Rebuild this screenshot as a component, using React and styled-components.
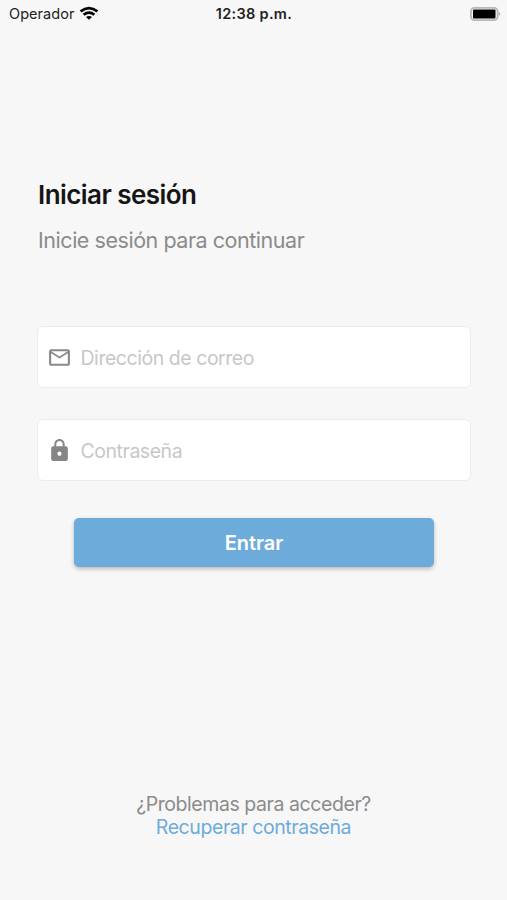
import React from 'react';
import styled, { createGlobalStyle } from 'styled-components';

const Global = createGlobalStyle`
  * { box-sizing: border-box; }
  body { margin: 0; background: #f7f7f7; font-family: Inter, sans-serif; }
`;
const Screen = styled.main`
  width: 507px; height: 900px; background: #f7f7f7;
  display: flex; flex-direction: column; overflow: hidden;
`;
const StatusBar = styled.header`
  height: 27px; padding: 0 6px 0 9px;
  display: grid; grid-template-columns: 1fr auto 1fr; align-items: center;
  font-size: 14.5px; color: #222;
`;
const Carrier = styled.div`
  display: flex; align-items: center; gap: 4px; letter-spacing: 0.06px;
`;
const Clock = styled.time`
  margin-right: 2px; font-weight: 600; font-size: 14.5px; letter-spacing: 0.3px;
`;
const Battery = styled.svg`justify-self: end;`;
const Heading = styled.div`padding: 151px 38px 0;`;
const Title = styled.h1`
  margin: 0; font-size: 26px; line-height: 34px; font-weight: 600;
  letter-spacing: -0.55px; color: #151515;
`;
const Subtitle = styled.p`
  margin: 13px 0 0; font-size: 21.5px; line-height: 30px; letter-spacing: -0.46px; color: #8b8b8b;
`;
const Form = styled.form`
  margin: 71px 36px 0 37px; display: flex; flex-direction: column;
`;
const Field = styled.label`
  height: 62px; margin-bottom: 31px; padding-left: 9px;
  display: flex; align-items: center; gap: 8px;
  background: #fff; border: 1px solid #ececec; border-radius: 6px;
`;
const Input = styled.input`
  flex: 1; min-width: 0; padding: 2px 0 0; border: 0; outline: 0; background: transparent;
  font: 400 19.5px Inter, sans-serif; letter-spacing: -0.46px; text-indent: 0.5px;
  &::placeholder { color: #c7c7c7; opacity: 1; }
`;
const Submit = styled.button`
  height: 49px; margin: 6px 37px 0; border: 0; border-radius: 5px;
  background: #6dabdb; color: #fff; font: 600 20px Inter, sans-serif;
  box-shadow: 0 2px 4px rgba(0,0,0,.25);
`;
const Help = styled.footer`
  margin-top: 226px; text-align: center; font-size: 19.5px; line-height: 23px;
  letter-spacing: -0.43px; color: #8b8b8b;
`;
const Recover = styled.a`display: block; color: #6dabdb;`;

export default function App() {
  return (
    <Screen>
      <Global />
      <StatusBar>
        <Carrier>
          <span>Operador</span>
          <svg width="20" height="15" viewBox="0 0 20 15" fill="none" stroke="#050505" strokeWidth="2.7">
            <path d="M1.6 5.4Q10-1.1 18.4 5.4M4.6 8.8Q10 4.5 15.4 8.8" />
            <path d="M7 11Q10 8.8 13 11L10 13.8Z" fill="#050505" stroke="none" />
          </svg>
        </Carrier>
        <Clock>12:38 p.m.</Clock>
        <Battery width="31" height="14" viewBox="0 0 31 14">
          <rect x=".9" y=".9" width="26.7" height="12.2" rx="3.5" fill="none" stroke="#b8b8b8" strokeWidth="1.8" />
          <rect x="3" y="2.5" width="22.5" height="9" rx="1" fill="#000" />
          <path d="M28.8 4.8Q31.7 7 28.8 9.2Z" fill="#aaa" />
        </Battery>
      </StatusBar>
      <Heading>
        <Title>Iniciar sesión</Title>
        <Subtitle>Inicie sesión para continuar</Subtitle>
      </Heading>
      <Form>
        <Field>
          <svg width="25" height="25" viewBox="0 0 24 24" fill="#888"><path d="M22 6c0-1.1-.9-2-2-2H4c-1.1 0-2 .9-2 2v12c0 1.1.9 2 2 2h16c1.1 0 2-.9 2-2V6zm-2 0-8 5-8-5h16zm0 12H4V8l8 5 8-5v10z" /></svg>
          <Input type="email" placeholder="Dirección de correo" />
        </Field>
        <Field>
          <svg width="25" height="25" viewBox="0 0 24 24" fill="#858585"><path d="M18 8h-1V6c0-2.76-2.24-5-5-5S7 3.24 7 6v2H6c-1.1 0-2 .9-2 2v10c0 1.1.9 2 2 2h12c1.1 0 2-.9 2-2V10c0-1.1-.9-2-2-2zm-6 9c-1.1 0-2-.9-2-2s.9-2 2-2 2 .9 2 2-.9 2-2 2zm3.1-9H8.9V6c0-1.71 1.39-3.1 3.1-3.1s3.1 1.39 3.1 3.1v2z" /></svg>
          <Input type="password" placeholder="Contraseña" />
        </Field>
        <Submit type="button">Entrar</Submit>
      </Form>
      <Help>¿Problemas para acceder?<Recover>Recuperar contraseña</Recover></Help>
    </Screen>
  );
}
